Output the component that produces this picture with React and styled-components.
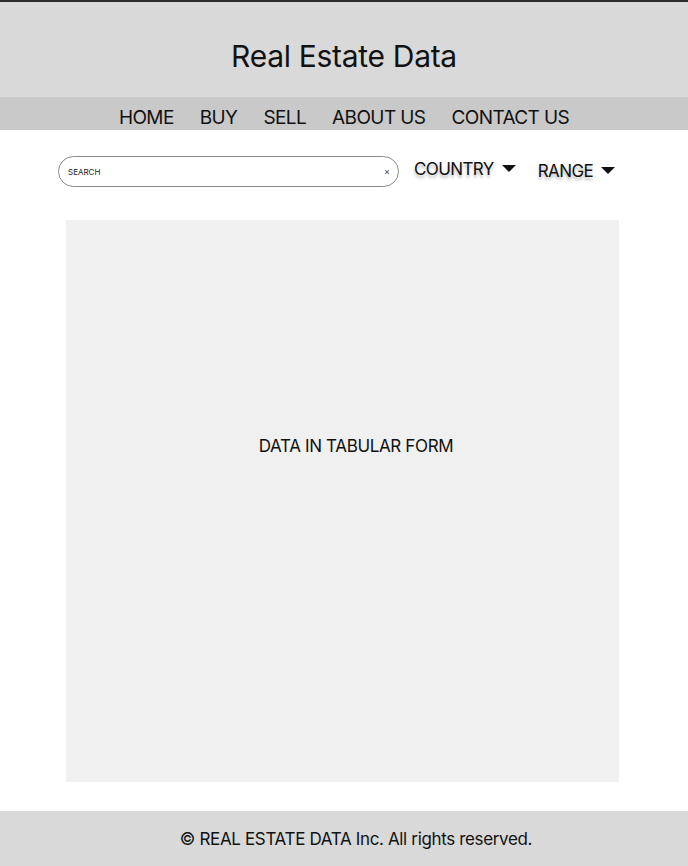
import React from "react";
import styled, { createGlobalStyle } from "styled-components";

const GlobalStyle = createGlobalStyle`
  * { box-sizing: border-box; }
  body {
    margin: 0;
    font-family: Inter, "Noto Sans", sans-serif;
    color: #111;
    background: #fff;
  }
`;

const Page = styled.div`
  display: flex;
  flex-direction: column;
  min-height: 866px;
  border-top: 2px solid #2b2b2b;
`;

const Header = styled.header`
  height: 95px;
  background: #d9d9d9;
  display: flex;
  align-items: center;
  justify-content: center;
  padding-top: 12px;
`;

const Title = styled.h1`
  margin: 0;
  font-size: 30px;
  font-weight: 400;
  letter-spacing: -0.3px;
`;

const Nav = styled.nav`
  height: 33px;
  background: #c9c9c9;
  display: flex;
  align-items: center;
  justify-content: center;
  gap: 26px;
  padding-top: 7px;
`;

const NavLink = styled.a`
  font-size: 19px;
  letter-spacing: -0.6px;
  color: #111;
  text-decoration: none;
`;

const Main = styled.main`
  flex: 1;
  display: flex;
  flex-direction: column;
  padding: 26px 0 29px;
`;

const Filters = styled.div`
  display: flex;
  align-items: center;
  margin-left: 58px;
  height: 31px;
`;

const SearchBox = styled.div`
  width: 341px;
  height: 31px;
  border: 1px solid #8a8a8a;
  border-radius: 16px;
  display: flex;
  align-items: center;
  padding: 0 8px 0 7px;
`;

const SearchInput = styled.input`
  flex: 1;
  border: none;
  outline: none;
  background: transparent;
  font-family: inherit;
  font-size: 8px;
  color: #222;
  &::placeholder { color: #222; }
`;

const Clear = styled.span`
  font-size: 9px;
  color: #444;
`;

const Dropdown = styled.div`
  display: flex;
  align-items: center;
  gap: 8px;
  margin-left: ${(p) => p.$gap}px;
  margin-top: ${(p) => p.$drop}px;
  font-size: 17px;
  letter-spacing: -0.6px;
  color: #111;
  text-shadow: 0 3px 3px rgba(0, 0, 0, 0.28);
`;

const Caret = styled.span`
  width: 0;
  height: 0;
  border-left: 7px solid transparent;
  border-right: 7px solid transparent;
  border-top: 7px solid #111;
`;

const DataPanel = styled.section`
  width: 553px;
  height: 562px;
  margin: 33px 0 0 66px;
  background: #f0f0f0;
  display: flex;
  align-items: flex-start;
  justify-content: center;
  padding: 216px 0 0 27px;
  font-size: 17px;
  letter-spacing: -0.35px;
`;

const Footer = styled.footer`
  height: 55px;
  background: #d9d9d9;
  display: flex;
  align-items: center;
  justify-content: center;
  padding-left: 24px;
  font-size: 17px;
  letter-spacing: -0.35px;
`;

export default function App() {
  return (
    <>
      <GlobalStyle />
      <Page>
        <Header>
          <Title>Real Estate Data</Title>
        </Header>
        <Nav>
          <NavLink>HOME</NavLink>
          <NavLink>BUY</NavLink>
          <NavLink>SELL</NavLink>
          <NavLink>ABOUT US</NavLink>
          <NavLink>CONTACT US</NavLink>
        </Nav>
        <Main>
          <Filters>
            <SearchBox>
              <SearchInput placeholder="SEARCH" />
              <Clear>×</Clear>
            </SearchBox>
            <Dropdown $gap={15} $drop={-6}>
              COUNTRY <Caret />
            </Dropdown>
            <Dropdown $gap={22} $drop={-2}>
              RANGE <Caret />
            </Dropdown>
          </Filters>
          <DataPanel>DATA IN TABULAR FORM</DataPanel>
        </Main>
        <Footer>© REAL ESTATE DATA Inc. All rights reserved.</Footer>
      </Page>
    </>
  );
}
